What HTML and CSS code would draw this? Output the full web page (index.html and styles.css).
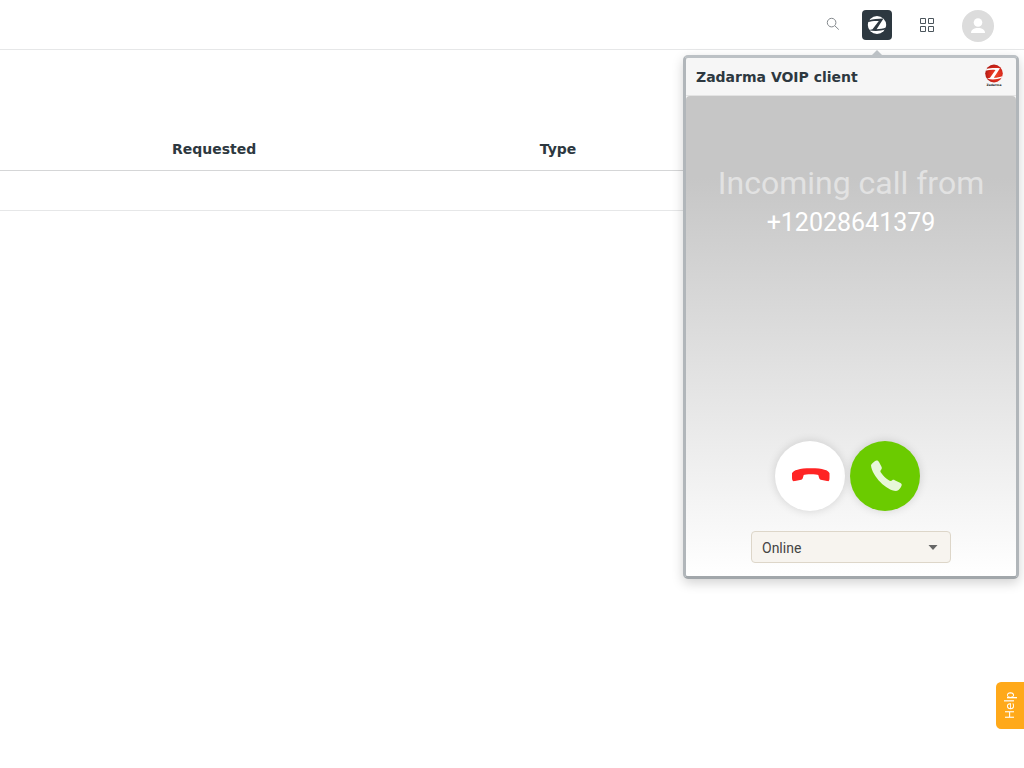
FILE: index.html
```html
<!DOCTYPE html>
<html lang="en">
<head>
<meta charset="utf-8">
<meta name="viewport" content="width=device-width, initial-scale=1">
<title>Requests</title>
<link rel="stylesheet" href="styles.css">
</head>
<body>
<header class="topbar">
  <button class="icon-button search" type="button" aria-label="Search">
    <svg width="14" height="14" viewBox="0 0 14 14" fill="none" stroke="#84898d"><circle cx="5.6" cy="5.6" r="4.3"/><path d="M8.8 8.8 12.8 12.6"/></svg>
  </button>
  <div class="phone-menu">
    <button class="icon-button phone-toggle" type="button" aria-label="Zadarma phone">
      <svg width="20" height="20" viewBox="0 0 20 20"><ellipse cx="10" cy="10" rx="9.200" ry="9" fill="#fff"/><path d="M2 5.200C6 4 11 3.900 16.500 3.600L9.600 14.300C13 14.200 16 13.800 19.500 12.300L18.500 14.500C14 16 8 16.500 1.500 15.300L5.500 14.300 11.800 6C8 5.700 4.500 6 .5 7.300Z" fill="#2d3840"/></svg>
    </button>
    <section class="phone-panel" aria-label="Zadarma VOIP client">
      <div class="panel-head">
        <h2 class="panel-title">Zadarma VOIP client</h2>
        <div class="brand">
          <svg width="18" height="19" viewBox="0 0 18 19"><defs><radialGradient id="ball" cx=".6" cy=".55" r=".65"><stop offset="0" stop-color="#f24a2c"/><stop offset=".55" stop-color="#d92a1c"/><stop offset="1" stop-color="#a51610"/></radialGradient></defs><ellipse cx="9" cy="9.500" rx="8.800" ry="9" fill="url(#ball)"/><path d="M1.500 5C5 3.900 10 3.900 15 4.200L8.800 13.800C12 13.700 15 13.200 17.800 12L16.500 14C12 15.500 7 15.800 2 14.800L5 13.700 10.500 6C7 5.700 4 5.900 .4 6.700Z" fill="#fff"/></svg>
          <span class="brand-name">Zadarma</span>
        </div>
      </div>
      <div class="call">
        <p class="call-label">Incoming call from</p>
        <p class="call-number">+12028641379</p>
        <div class="call-actions">
          <button class="call-button decline" type="button" aria-label="Decline">
            <svg width="40" height="16" viewBox="-1 1 40 16"><path d="M1 10.500V6.200C2.500 3.200 8 1.200 20 1.200S37.500 3.200 38.500 6.200V10.500C38.500 14 38 14.500 36 14L31 13C29 12.600 28.400 12 28 10.500L27.300 8C26 7 14 7 12.700 8L12 10.500C11.600 12 11 12.600 9 13L4 14C2 14.500 1 14 1 10.500Z" fill="#ff2424"/></svg>
          </button>
          <button class="call-button answer" type="button" aria-label="Answer">
            <svg width="34" height="34" viewBox="-1 0 34 34"><path d="M2 6.500C2 5 5.500 2 7.500 1.500C8.600 1.300 9.500 2 10 3L12.500 7.800C13.200 9.200 12.800 10.100 11.800 11.200L11.300 12C11.500 14.500 19 22 22 22L23.200 21.300C24 20.700 24.800 20.700 25.700 21.200L31.500 24.100C33 25 33 26 32.300 27.300C31.500 29 29.500 32 27 32C17.500 31.700 3 17 2 6.500Z" fill="#e7f7d9"/></svg>
          </button>
        </div>
        <label class="status">
          <select class="status-select" aria-label="Status">
            <option>Online</option>
            <option>Offline</option>
          </select>
          <svg class="status-arrow" width="10" height="5" viewBox="0 0 10 5"><path d="M.5 0H9.500L5 5Z" fill="#666"/></svg>
        </label>
      </div>
    </section>
  </div>
  <button class="icon-button apps" type="button" aria-label="Apps">
    <svg width="14" height="14" viewBox="0 0 14 14" fill="none" stroke="#4b555c"><path d="M.5.5h5v5h-5zM8.500.5h5v5h-5zM.5 8.500h5v5h-5zM8.500 8.500h5v5h-5z"/></svg>
  </button>
  <button class="icon-button avatar" type="button" aria-label="Account">
    <svg width="32" height="32" viewBox="0 0 32 32" fill="#fff"><circle cx="16" cy="12.500" r="4.300"/><path d="M9 23C9 19.500 12 18 16 18S23 19.500 23 23Z"/></svg>
  </button>
</header>
<main class="content">
  <table class="requests">
    <colgroup><col class="col-lead"><col class="col-requested"><col></colgroup>
    <thead><tr><td></td><th scope="col">Requested</th><th scope="col">Type</th></tr></thead>
    <tbody><tr><td></td><td></td><td></td></tr></tbody>
  </table>
</main>
<button class="help" type="button">Help</button>
</body>
</html>
```
FILE: styles.css
```css
* { box-sizing: border-box; }

body {
  min-height: 100vh;
  margin: 0;
  background: #fff;
  color: #2d3840;
  font: 14px/20px "DejaVu Sans", sans-serif;
}

button {
  border: 0;
  padding: 0;
  cursor: pointer;
}

svg { display: block; }

.topbar {
  display: flex;
  align-items: center;
  justify-content: flex-end;
  height: 50px;
  padding-right: 30px;
  border-bottom: 1px solid #e6e7e8;
}

.icon-button {
  display: flex;
  align-items: center;
  justify-content: center;
  background: none;
}

.search { margin-right: 22px; padding-bottom: 2px; }

.phone-menu {
  position: relative;
  margin-right: 28px;
}

.phone-toggle {
  width: 30px;
  height: 30px;
  border-radius: 4px;
  background: #2d3840;
}

.apps { margin-right: 28px; }

.avatar {
  width: 32px;
  height: 32px;
  margin-top: 2px;
  border-radius: 50%;
  background: #dcdcdc;
}

.phone-panel {
  position: absolute;
  top: 45px;
  right: -127px;
  width: 336px;
  border: 3px solid;
  border-color: #bcc1c5 #b1b6ba #a2a7ab;
  border-radius: 5px;
  background: #f6f6f6;
  box-shadow: 0 4px 12px rgba(0, 0, 0, .18);
}

.phone-panel::before {
  content: "";
  position: absolute;
  top: -8px;
  right: 134px;
  border: 5px solid transparent;
  border-top: 0;
  border-bottom-color: #bcc1c5;
}

.panel-head {
  display: flex;
  align-items: center;
  justify-content: space-between;
  height: 38px;
  padding: 0 12px 0 10px;
  border-bottom: 1px solid #e3e3e3;
}

.panel-title {
  margin: 0;
  padding-top: 2px;
  font-size: 14px;
  line-height: 20px;
}

.brand {
  display: flex;
  flex-direction: column;
  align-items: center;
  width: 20px;
}

.brand-name {
  font: bold 3px/5px "DejaVu Sans", sans-serif;
  color: #222;
}

.call {
  display: flex;
  flex-direction: column;
  align-items: center;
  padding: 66px 10px 13px;
  border-radius: 4px 4px 2px 2px;
  background: linear-gradient(#c6c6c6 17%, #fff);
  font-family: Roboto, sans-serif;
}

.call-label,
.call-number {
  margin: 0;
  white-space: nowrap;
}

.call-label {
  color: #e2e2e2;
  font-size: 32px;
  line-height: 42px;
}

.call-number {
  color: #fff;
  font-size: 25px;
  line-height: 38px;
}

.call-actions {
  display: flex;
  gap: 5px;
  margin: 199px 8px 20px 0;
}

.call-button {
  display: flex;
  align-items: center;
  justify-content: center;
  width: 70px;
  height: 70px;
  border-radius: 50%;
  box-shadow: 0 0 10px rgba(0, 0, 0, .14);
}

.decline { background: #fff; }
.answer { background: #6bcb00; }

.status {
  position: relative;
  width: 200px;
}

.status-select {
  display: block;
  appearance: none;
  width: 100%;
  height: 32px;
  padding: 2px 10px 0;
  border: 1px solid #ddd6c9;
  border-radius: 4px;
  background: #f7f4ef;
  color: #444;
  font: 14px/20px Roboto, sans-serif;
}

.status-arrow {
  position: absolute;
  top: 14px;
  right: 13px;
  pointer-events: none;
}

.content { padding: 78px 30px 0 0; }

.requests {
  width: 100%;
  border-collapse: collapse;
  table-layout: fixed;
}

.col-lead { width: 16.5%; }
.col-requested { width: 37%; }

.requests th,
.requests td {
  height: 40px;
  padding: 0 8px;
  border-bottom: 1px solid #e6e7e8;
  text-align: left;
}

.requests thead th,
.requests thead td {
  height: 42px;
  border-bottom-color: #d5d6d7;
}

.help {
  position: fixed;
  right: 0;
  bottom: 39px;
  width: 28px;
  height: 47px;
  border-radius: 0 5px 5px 0;
  background: #ffa91a;
  color: #fff;
  font: 12px/28px "DejaVu Sans", sans-serif;
  writing-mode: vertical-rl;
  rotate: 180deg;
}
```
